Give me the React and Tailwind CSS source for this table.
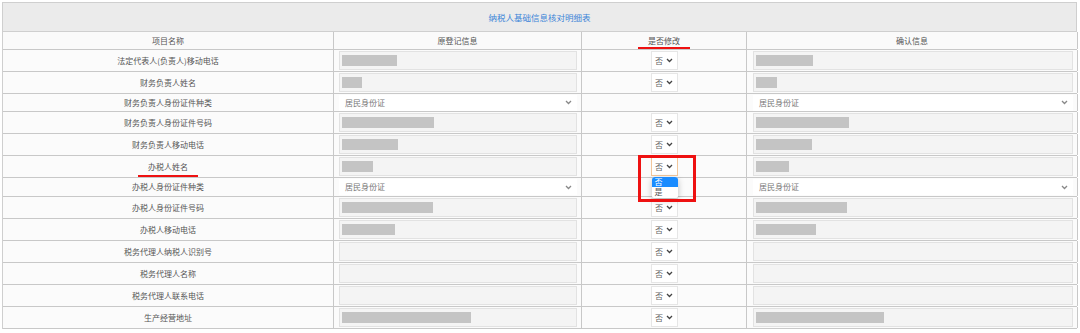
import React from "react";

const COLS = "grid grid-cols-[331px_248px_165px_331px]";

const rows = [
  { label: "法定代表人(负责人)移动电话", a: 55, b: 57 },
  { label: "财务负责人姓名", a: 20, b: 21 },
  { label: "财务负责人身份证件种类", type: "id" },
  { label: "财务负责人身份证件号码", a: 92, b: 93 },
  { label: "财务负责人移动电话", a: 56, b: 56 },
  { label: "办税人姓名", a: 31, b: 33, mark: true, open: true },
  { label: "办税人身份证件种类", type: "id" },
  { label: "办税人身份证件号码", a: 91, b: 91 },
  { label: "办税人移动电话", a: 53, b: 60 },
  { label: "税务代理人纳税人识别号", a: 0, b: 0 },
  { label: "税务代理人名称", a: 0, b: 0 },
  { label: "税务代理人联系电话", a: 0, b: 0 },
  { label: "生产经营地址", a: 129, b: 128 },
];

function Chevron({ className = "" }) {
  return (
    <svg width="7" height="5" viewBox="0 0 7 5" className={className}>
      <path d="M1 1 L3.5 3.5 L6 1" fill="none" stroke="currentColor" strokeWidth="1.3" />
    </svg>
  );
}

function TextBox({ w }) {
  return (
    <div className="h-[19px] bg-[#f4f4f4] border border-[#e2e2e2] flex items-center pl-[2px]">
      {w > 0 && <div className="h-[11px] bg-[#c4c4c4]" style={{ width: w }} />}
    </div>
  );
}

function IdSelect() {
  return (
    <div className="h-[16px] bg-white flex items-center justify-between pl-[6px] pr-[5px] text-[#777]">
      <span>居民身份证</span>
      <Chevron className="text-[#888]" />
    </div>
  );
}

function YesNo({ open }) {
  return (
    <div className="relative">
      <div
        className={`w-[27px] h-[19px] bg-white border flex items-center justify-center gap-[3px] text-[#666] ${
          open ? "border-[#f3c79b]" : "border-[#e6e6e6]"
        }`}
      >
        <span>否</span>
        <Chevron className="text-[#444]" />
      </div>
      {open && (
        <div className="absolute left-[1px] top-[20px] w-[26px] bg-white rounded-[3px] shadow-[0_2px_6px_rgba(0,0,0,0.25)] overflow-hidden z-30 leading-[10px]">
          <div className="h-[10px] bg-[#1a8cff] text-white pl-[3px]">否</div>
          <div className="h-[11px] bg-white text-[#555] pl-[3px]">是</div>
        </div>
      )}
    </div>
  );
}

export default function App() {
  return (
    <div
      className="w-[1080px] h-[333px] bg-white pt-[2px] pl-[2px] text-[8px] leading-[10px] text-[#555]"
      style={{ fontFamily: '"Noto Sans CJK SC", "Noto Sans", sans-serif' }}
    >
      <div className="relative w-[1075px] border-t border-l border-[#cfcfcf]">
        {/* title */}
        <div className="h-[29px] bg-[#ebebeb] border-b border-r border-[#cfcfcf] flex items-center justify-center text-[8.5px] text-[#3d85d8]">
          纳税人基础信息核对明细表
        </div>

        {/* header */}
        <div className={`${COLS} h-[18px] bg-[#fafafa] border-b border-[#c8c8c8]`}>
          <div className="border-r border-[#c8c8c8] flex items-center justify-center">项目名称</div>
          <div className="border-r border-[#c8c8c8] flex items-center justify-center">原登记信息</div>
          <div className="border-r border-[#c8c8c8] flex items-center justify-center">
            <span className="inline-block px-[10px] pt-[3px] pb-[1px] border-b-2 border-[#ee1111]">是否修改</span>
          </div>
          <div className="border-r border-[#c8c8c8] flex items-center justify-center">确认信息</div>
        </div>

        {rows.map((r, i) => {
          const isId = r.type === "id";
          return (
            <div
              key={i}
              className={`${COLS} ${isId ? (i === 2 ? "h-[18px]" : "h-[19px]") : "h-[22px]"} bg-[#fbfbfb] border-b border-[#c8c8c8]`}
            >
              <div className="border-r border-[#c8c8c8] flex items-center justify-center">
                {r.mark ? (
                  <span className="inline-block px-[10px] pt-[5px] pb-[3px] border-b-2 border-[#ee1111]">{r.label}</span>
                ) : (
                  r.label
                )}
              </div>
              <div className="border-r border-[#c8c8c8] pl-[5px] pr-[4px] flex flex-col justify-center">
                {isId ? <IdSelect /> : <TextBox w={r.a} />}
              </div>
              <div className="border-r border-[#c8c8c8] flex items-center justify-center">
                {!isId && <YesNo open={r.open} />}
              </div>
              <div className="border-r border-[#c8c8c8] pl-[6px] pr-[4px] flex flex-col justify-center">
                {isId ? <IdSelect /> : <TextBox w={r.b} />}
              </div>
            </div>
          );
        })}

        {/* red highlight box */}
        <div className="absolute left-[635px] top-[152px] w-[58px] h-[47px] border-[3px] border-[#ee1111] z-40 pointer-events-none" />
      </div>
    </div>
  );
}
